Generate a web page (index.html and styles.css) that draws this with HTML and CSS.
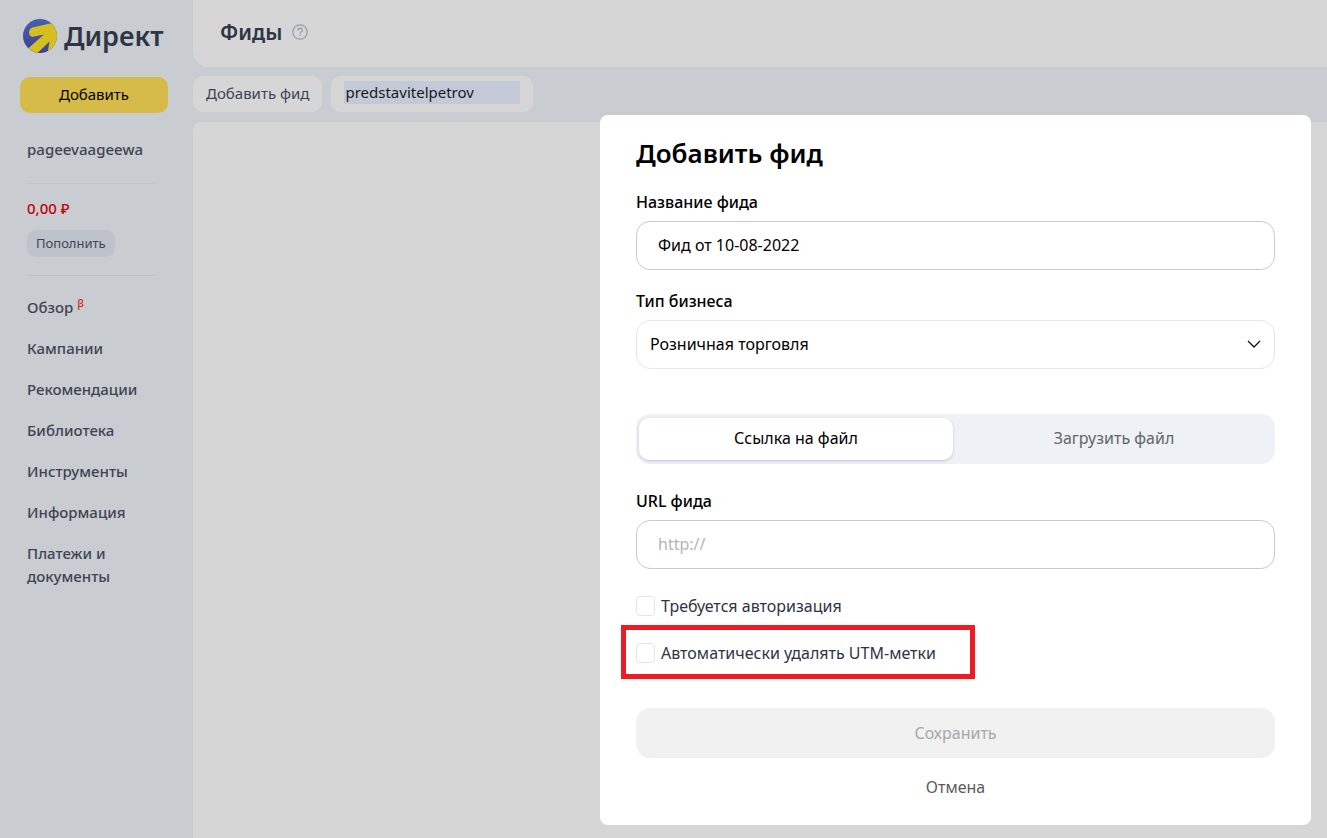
FILE: index.html
```html
<!DOCTYPE html>
<html lang="ru">
<head>
<meta charset="utf-8">
<title>Директ — Фиды</title>
<link rel="stylesheet" href="styles.css">
</head>
<body>
<div class="app">
  <aside class="sidebar">
    <a class="logo" href="#">
      <svg class="logo-mark" viewBox="0 0 34 34" aria-hidden="true">
        <defs>
          <linearGradient id="blue" x1="0" y1="0" x2="0" y2="1"><stop offset="0" stop-color="#4562ad"/><stop offset="1" stop-color="#3c3f94"/></linearGradient>
          <clipPath id="disc"><circle cx="17" cy="17" r="17"/></clipPath>
        </defs>
        <g clip-path="url(#disc)">
          <path fill="url(#blue)" d="M0 0h34v34H0z"/>
          <path fill="#d5bf1f" d="M9.500 8.500L27 4.500L36 6V34H24.500L26.500 22.500L14.500 34H12L5 29.500L21 15.500L10 17.800C5 18 4.500 10 9.500 8.500Z"/>
        </g>
      </svg>
      <span>Директ</span>
    </a>
    <button class="add" type="button">Добавить</button>
    <a class="account" href="#">pageevaageewa</a>
    <section class="wallet">
      <strong class="balance">0,00 ₽</strong>
      <button class="topup" type="button">Пополнить</button>
    </section>
    <nav class="menu">
      <a href="#">Обзор <sup>β</sup></a>
      <a href="#">Кампании</a>
      <a href="#">Рекомендации</a>
      <a href="#">Библиотека</a>
      <a href="#">Инструменты</a>
      <a href="#">Информация</a>
      <a href="#">Платежи и документы</a>
    </nav>
  </aside>
  <main class="main">
    <header class="header">
      <h1>Фиды</h1>
      <button class="help" type="button" aria-label="Справка">
        <svg viewBox="0 0 16 16" aria-hidden="true"><circle cx="8" cy="8" r="7.200"/><path d="M5.800 6.500C5.800 3.500 10.400 3.600 10.400 6.300C10.400 8 8.100 7.900 8.100 9.500M8.100 10.800V12.100"/></svg>
      </button>
    </header>
    <div class="toolbar">
      <button class="chip" type="button">Добавить фид</button>
      <label class="chip search"><input type="text" value="predstavitelpetrov" aria-label="Логин"></label>
    </div>
    <section class="content"></section>
  </main>
</div>
<form class="modal" role="dialog" aria-labelledby="modal-title">
  <h2 id="modal-title">Добавить фид</h2>
  <div class="field">
    <label for="name">Название фида</label>
    <input class="control" id="name" type="text" value="Фид от 10-08-2022">
  </div>
  <div class="field">
    <label for="business">Тип бизнеса</label>
    <div class="select">
      <select class="control" id="business"><option>Розничная торговля</option></select>
      <svg class="chevron" viewBox="0 0 14 8" aria-hidden="true"><path d="M1 1l6 6 6-6"/></svg>
    </div>
  </div>
  <div class="tabs">
    <button class="tab active" type="button">Ссылка на файл</button>
    <button class="tab" type="button">Загрузить файл</button>
  </div>
  <div class="field">
    <label for="url">URL фида</label>
    <input class="control" id="url" type="text" placeholder="http://">
  </div>
  <div class="checks">
    <label class="check"><input type="checkbox">Требуется авторизация</label>
    <label class="check marked"><input type="checkbox">Автоматически удалять UTM-метки</label>
  </div>
  <button class="save" type="submit" disabled>Сохранить</button>
  <button class="cancel" type="button">Отмена</button>
</form>
</body>
</html>
```
FILE: styles.css
```css
* { box-sizing: border-box; }
body {
  margin: 0;
  background: #c9ccd1;
  color: #3e4453;
  font: 16px/24px "Noto Sans", "Open Sans", sans-serif;
}
button, input, select { font: inherit; color: inherit; }
button { border: 0; padding: 0; background: none; }
a { color: inherit; text-decoration: none; }
h1, h2 { margin: 0; }

.app { display: flex; min-height: 100vh; font-size: 15px; }

.sidebar {
  flex: 0 0 193px;
  min-width: 0;
  display: flex;
  flex-direction: column;
  padding: 16px 25px 24px 20px;
}
.logo {
  display: flex;
  align-items: center;
  gap: 7px;
  height: 40px;
  padding-left: 3px;
  color: #2f3545;
  font-size: 27px;
  font-weight: 600;
}
.logo-mark { flex: none; width: 34px; height: 34px; }
.add {
  height: 36px;
  margin-top: 21px;
  padding-bottom: 2px;
  border-radius: 10px;
  background: #d6bb48;
  color: #000;
}
.account {
  margin: 24px 12px 0 7px;
  padding-bottom: 22px;
  border-bottom: 1px solid #bfc3c9;
  font-weight: 500;
}
.wallet {
  display: flex;
  flex-direction: column;
  align-items: flex-start;
  gap: 10px;
  margin: 0 12px 0 7px;
  padding: 12px 0 18px;
  border-bottom: 1px solid #bfc3c9;
}
.balance { color: #bf0410; font-weight: 500; }
.topup {
  height: 27px;
  padding: 0 9px 2px;
  border-radius: 9px;
  background: #bec3cb;
  font-size: 13px;
}
.menu {
  display: flex;
  flex-direction: column;
  gap: 18px;
  margin: 20px 0 0 7px;
  line-height: 23px;
  font-weight: 500;
}
.menu sup { color: #d22b20; font-size: 11px; line-height: 0; }

.main { flex: 1; display: flex; flex-direction: column; min-width: 0; }
.header {
  display: flex;
  align-items: center;
  gap: 10px;
  height: 67px;
  padding: 0 27px 4px;
  border-radius: 0 0 0 16px;
  background: #d6d6d6;
}
.header h1 { color: #2f3545; font-size: 21px; font-weight: 600; }
.help { display: flex; }
.help svg { width: 16px; height: 16px; fill: none; stroke: #969daa; stroke-width: 1.3; }
.toolbar { display: flex; gap: 9px; padding: 9px 0 10px; }
.chip {
  height: 36px;
  padding: 0 13px 3px;
  border-radius: 10px;
  background: #d6d6d6;
}
.search { display: flex; align-items: center; }
.search input {
  width: 176px;
  height: 23px;
  padding: 0 0 2px 1px;
  border: 0;
  background: #c3c9d6;
  color: #17191f;
}
.content { flex: 1; border-radius: 8px 0 0 0; background: #d6d6d6; }

.modal {
  position: absolute;
  top: 115px;
  right: 16px;
  width: 711px;
  max-width: calc(100% - 32px);
  display: flex;
  flex-direction: column;
  padding: 22px 36px 26px;
  border-radius: 8px;
  background: #fff;
  color: #000;
}
.modal h2 { margin-bottom: 21px; font-size: 26px; line-height: 32px; font-weight: 600; }
.field { display: flex; flex-direction: column; gap: 7px; }
.field + .field { margin-top: 19px; }
.field label { font-weight: 500; }
.control {
  width: 100%;
  height: 49px;
  padding: 0 21px 2px;
  border: 1px solid #cacaca;
  border-radius: 14px;
  background: #fff;
}
.control::placeholder { color: #b5b5b8; opacity: 1; }
.select { position: relative; display: flex; }
.select .control { appearance: none; padding: 0 13px 2px; border-color: #e6e6f1; }
.chevron {
  position: absolute;
  top: 20px;
  right: 14px;
  width: 14px;
  height: 8px;
  fill: none;
  stroke: #111;
  stroke-width: 1.3;
  pointer-events: none;
}
.tabs {
  display: grid;
  grid-template-columns: 314fr 322fr;
  height: 50px;
  margin: 45px 0 25px;
  padding: 4px 0 4px 3px;
  border-radius: 14px;
  background: #eef1f6;
}
.tab { padding-bottom: 2px; border-radius: 10px; color: #646569; }
.tab.active { background: #fff; color: #000; box-shadow: 0 1px 3px #bcc6db; }
.checks {
  display: flex;
  flex-direction: column;
  align-items: flex-start;
  gap: 23px;
  margin: 25px 0 43px;
  color: #2f3445;
}
.check { position: relative; display: flex; align-items: center; gap: 6px; }
.check input {
  appearance: none;
  width: 19px;
  height: 20px;
  margin: 0;
  border: 1px solid #e4e4ef;
  border-radius: 4px;
  background: #fff;
}
.marked::after {
  content: "";
  position: absolute;
  inset: -16px -39px -14px -15px;
  border: 5px solid #ed1c24;
  pointer-events: none;
}
.save { height: 50px; border-radius: 14px; background: #f1f1f1; color: #a8a8a8; }
.cancel { align-self: center; margin-top: 17px; color: #5b5b5d; }
```
